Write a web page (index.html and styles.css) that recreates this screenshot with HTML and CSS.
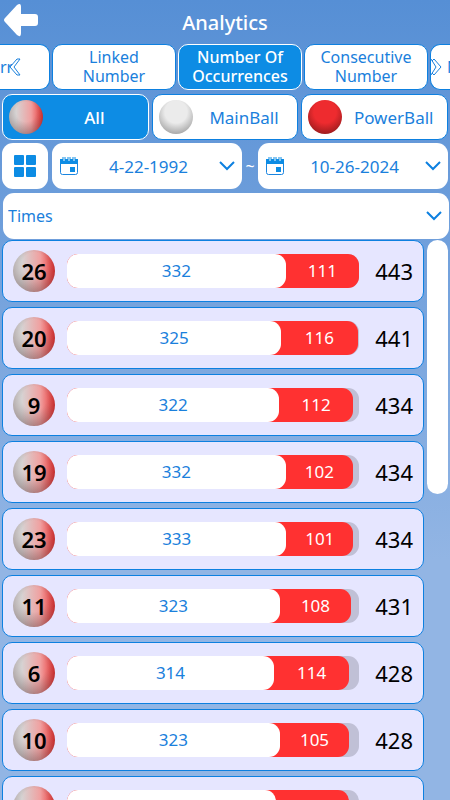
FILE: index.html
```html
<!DOCTYPE html>
<html lang="en">

<head>
    <meta charset="UTF-8">
    <meta name="viewport" content="width=device-width, initial-scale=1.0">
    <title>Analytics</title>
    <link rel="stylesheet" href="styles.css">
</head>

<body>
    <header class="header">
        <button class="back" aria-label="Back">
            <svg width="36" height="34" viewBox="0 0 36 34">
                <path d="M2 15 L14 2 Q18 -1 18 4 V11 H32 Q35 11 35 14 V20 Q35 23 32 23 H18 V30 Q18 35 14 32 L2 19 Q0 17 2 15Z" fill="#fff" />
            </svg>
        </button>
        <h1>Analytics</h1>
    </header>

    <nav class="tabs">
        <button class="tab tab-first">rr</button>
        <button class="tab">Linked<br>Number</button>
        <button class="tab active">Number Of<br>Occurrences</button>
        <button class="tab">Consecutive<br>Number</button>
        <button class="tab tab-last">N</button>
        <svg class="more more-left" width="12" height="18" viewBox="0 0 12 18">
            <path d="M8 1 L1 9 L8 17 L11 17 L5 9 L11 1Z" />
        </svg>
        <svg class="more more-right" width="12" height="18" viewBox="0 0 12 18">
            <path d="M1 1 L6 9 L1 17 M4 1 L11 9 L4 17 L2 15 M4 1 L2 3" />
        </svg>
    </nav>

    <div class="types">
        <button class="type active"><span class="ball ball-all"></span><span class="type-name">All</span></button>
        <button class="type"><span class="ball ball-main"></span><span class="type-name">MainBall</span></button>
        <button class="type"><span class="ball ball-power"></span><span class="type-name">PowerBall</span></button>
    </div>

    <div class="dates">
        <button class="grid-btn" aria-label="Grid view">
            <svg width="24" height="24" viewBox="0 0 24 24" fill="#0d8ce4">
                <rect x="1" y="1" width="10" height="10" rx="1" />
                <rect x="13" y="1" width="10" height="10" rx="1" />
                <rect x="1" y="13" width="10" height="10" rx="1" />
                <rect x="13" y="13" width="10" height="10" rx="1" />
            </svg>
        </button>
        <label class="date">
            <svg class="calendar" width="20" height="20" viewBox="0 0 20 20">
                <rect x="1.5" y="3.5" width="17" height="15" rx="2" fill="#fff" stroke="#1a85e0" />
                <path d="M1 8 V3 H19 V8Z" fill="#0d8ce4" />
                <path d="M5 1 V5 M10 1 V5 M15 1 V5" stroke="#0d8ce4" stroke-width="3" />
                <path d="M5 1 V5 M10 1 V5 M15 1 V5" stroke="#fff" />
                <rect x="11" y="11" width="5" height="5" fill="#0d8ce4" />
            </svg>
            <input type="text" value="4-22-1992" aria-label="Start date" readonly>
            <svg class="chevron" width="18" height="12" viewBox="0 0 18 12"><path d="M2 2 L9 9 L16 2" /></svg>
        </label>
        <span class="tilde">~</span>
        <label class="date">
            <svg class="calendar" width="20" height="20" viewBox="0 0 20 20">
                <rect x="1.5" y="3.5" width="17" height="15" rx="2" fill="#fff" stroke="#1a85e0" />
                <path d="M1 8 V3 H19 V8Z" fill="#0d8ce4" />
                <path d="M5 1 V5 M10 1 V5 M15 1 V5" stroke="#0d8ce4" stroke-width="3" />
                <path d="M5 1 V5 M10 1 V5 M15 1 V5" stroke="#fff" />
                <rect x="11" y="11" width="5" height="5" fill="#0d8ce4" />
            </svg>
            <input type="text" value="10-26-2024" aria-label="End date" readonly>
            <svg class="chevron" width="18" height="12" viewBox="0 0 18 12"><path d="M2 2 L9 9 L16 2" /></svg>
        </label>
    </div>

    <label class="sort">
        <select aria-label="Sort by">
            <option>Times</option>
        </select>
        <svg class="chevron" width="18" height="12" viewBox="0 0 18 12"><path d="M2 2 L9 9 L16 2" /></svg>
    </label>

    <main class="results">
        <div class="list" id="list"></div>
        <div class="scroll">
            <div class="thumb"></div>
        </div>
    </main>

    <script src="script.js"></script>
</body>

</html>
```

FILE: styles.css
```css
* {
    margin: 0;
    padding: 0;
    box-sizing: border-box;
    font-family: "Noto Sans", "Open Sans", sans-serif;
}

body {
    height: 100vh;
    display: flex;
    flex-direction: column;
    overflow: hidden;
    background: linear-gradient(#568fd5, #92b5e4 70%);
}

button {
    border: none;
    cursor: pointer;
}

.header {
    display: grid;
    grid-template-columns: 44px 1fr 44px;
    align-items: center;
    height: 44px;
    flex-shrink: 0;
}

.header h1 {
    color: white;
    font-size: 20px;
    font-weight: 500;
    text-align: center;
}

.back {
    display: flex;
    padding: 0 3px 4px;
    background: none;
}

.tabs {
    position: relative;
    display: grid;
    grid-template-columns: 50px 1fr 1fr 1fr 20px;
    gap: 2px;
    height: 46px;
    flex-shrink: 0;
}

.tab {
    background-color: white;
    color: #1a80dc;
    border: 1px solid #0d80e0;
    border-radius: 10px;
    font-size: 16px;
    line-height: 19px;
}

.active {
    background-color: #0d8ce4;
    color: white;
    border-color: white;
    font-weight: 500;
}

.tab-first {
    border-left: none;
    border-radius: 0 10px 10px 0;
    text-align: left;
}

.tab-last {
    border-right: none;
    border-radius: 10px 0 0 10px;
    padding-left: 16px;
    text-align: left;
    overflow: hidden;
}

.more {
    position: absolute;
    top: 14px;
    fill: white;
    stroke: #1a80dc;
}

.more-left {
    left: 9px;
}

.more-right {
    right: 8px;
}

.types {
    display: grid;
    grid-template-columns: repeat(3, 1fr);
    gap: 3px;
    padding: 4px 2px 3px;
    flex-shrink: 0;
}

.type {
    display: flex;
    align-items: center;
    height: 46px;
    padding: 0 6px;
    background-color: white;
    color: #1a80dc;
    border: 1px solid #0d80e0;
    border-radius: 10px;
    font-size: 17px;
}

.type.active {
    background-color: #0d8ce4;
    color: white;
    border-color: white;
}

.type-name {
    flex: 1;
    padding-left: 4px;
}

.ball {
    width: 34px;
    height: 34px;
    border-radius: 50%;
    flex-shrink: 0;
}

.ball-all,
.number {
    background:
        radial-gradient(circle at 50% 35%, transparent 35%, rgba(70, 40, 40, 0.4) 85%),
        linear-gradient(90deg, #d6d4d4 20%, #f0a0a0 65%, #e83030);
}

.ball-main {
    background: radial-gradient(circle at 50% 35%, #ebebeb 40%, #a8a8a8 80%);
}

.ball-power {
    background: radial-gradient(circle at 50% 35%, #ee2b2f 40%, #9e1c1e 80%);
}

.dates {
    display: flex;
    align-items: center;
    padding: 0 2px 4px;
    flex-shrink: 0;
}

.grid-btn,
.date,
.sort {
    height: 46px;
    background-color: white;
    border-radius: 11px;
}

.grid-btn {
    display: flex;
    align-items: center;
    justify-content: center;
    width: 46px;
    margin-right: 4px;
}

.date {
    display: flex;
    align-items: center;
    flex: 1;
    min-width: 0;
    padding: 0 6px 0 7px;
}

.date input {
    flex: 1;
    min-width: 0;
    border: none;
    outline: none;
    background: none;
    color: #1a80dc;
    font-size: 17px;
    text-align: center;
}

.calendar {
    flex-shrink: 0;
}

.chevron {
    flex-shrink: 0;
    fill: none;
    stroke: #0d80e0;
    stroke-width: 2;
}

.tilde {
    width: 16px;
    color: white;
    font-size: 16px;
    text-align: center;
}

.sort {
    display: flex;
    align-items: center;
    margin: 0 1px 0 3px;
    padding: 0 6px 0 5px;
    flex-shrink: 0;
}

.sort select {
    flex: 1;
    appearance: none;
    border: none;
    outline: none;
    background: none;
    color: #1a80dc;
    font-size: 16px;
}

.results {
    display: flex;
    flex: 1;
    min-height: 0;
    gap: 3px;
    padding: 1px 2px 0;
}

.list {
    display: flex;
    flex-direction: column;
    flex: 1;
    gap: 5px;
    overflow: hidden;
}

.card {
    display: flex;
    align-items: center;
    height: 62px;
    flex-shrink: 0;
    padding: 0 10px;
    background-color: #e6e6ff;
    border: 1px solid #0d80e0;
    border-radius: 10px;
}

.number {
    width: 42px;
    height: 42px;
    margin-right: 12px;
    border-radius: 50%;
    color: black;
    font-size: 22px;
    font-weight: 600;
    line-height: 42px;
    text-align: center;
}

.bar {
    flex: 1;
    height: 34px;
    border-radius: 11px;
    background-color: #c0c0d6;
}

.fill {
    display: flex;
    height: 100%;
    border-radius: 11px;
    background-color: #ff3131;
    font-size: 17px;
    line-height: 34px;
    text-align: center;
}

.main {
    border-radius: 11px;
    background-color: white;
    color: #1a80dc;
}

.power {
    flex: 1;
    color: white;
}

.total {
    width: 54px;
    color: black;
    font-size: 22px;
    text-align: right;
}

.scroll {
    width: 21px;
}

.thumb {
    height: 254px;
    border-radius: 11px;
    background-color: white;
}
```

FILE: script.js
```js
const results = [
    { number: 26, main: 332, power: 111 },
    { number: 20, main: 325, power: 116 },
    { number: 9, main: 322, power: 112 },
    { number: 19, main: 332, power: 102 },
    { number: 23, main: 333, power: 101 },
    { number: 11, main: 323, power: 108 },
    { number: 6, main: 314, power: 114 },
    { number: 10, main: 323, power: 105 },
    { number: 24, main: 317, power: 111 }
]
const list = document.querySelector('#list')
const max = results[0].main + results[0].power

results.forEach((item) => {
    const total = item.main + item.power
    list.innerHTML += `
        <div class="card">
            <span class="number">${item.number}</span>
            <div class="bar">
                <div class="fill" style="width: ${total / max * 100}%">
                    <div class="main" style="width: ${item.main / total * 100}%">${item.main}</div>
                    <div class="power">${item.power}</div>
                </div>
            </div>
            <span class="total">${total}</span>
        </div>`
})
```
